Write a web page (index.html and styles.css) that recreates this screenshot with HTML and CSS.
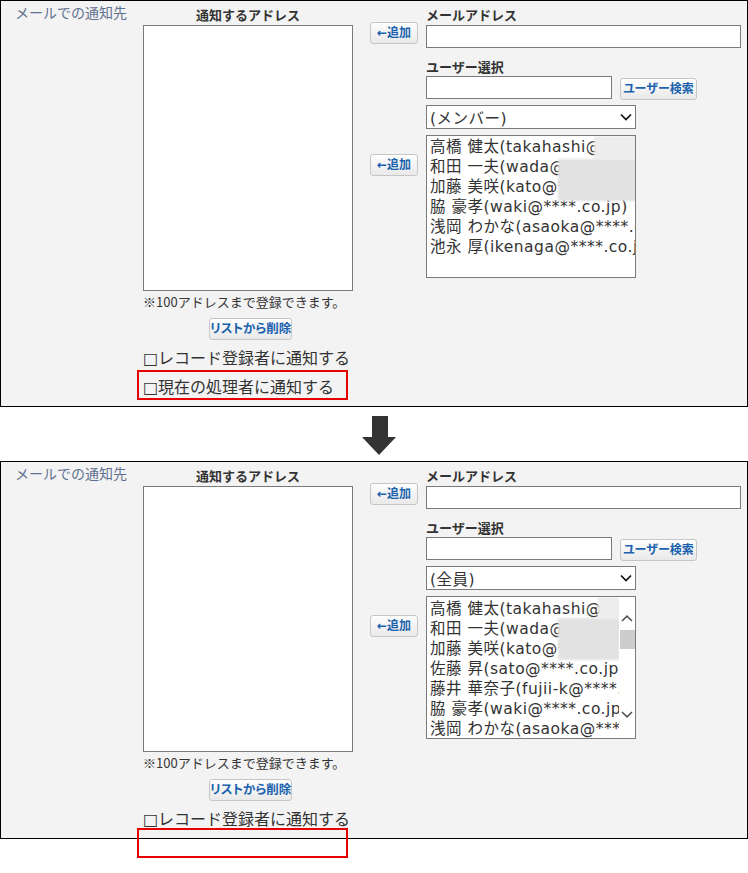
FILE: index.html
```html
<!DOCTYPE html>
<html lang="ja">
<head>
<meta charset="utf-8">
<title>メールでの通知先</title>
<link rel="stylesheet" href="styles.css">
</head>
<body>
<div class="page">
  <section class="panel">
    <div class="label">メールでの通知先</div>
    <div class="addr-col">
      <div class="col-title">通知するアドレス</div>
      <textarea class="addr-list"></textarea>
      <div class="note">※100アドレスまで登録できます。</div>
      <div class="btn-row"><button class="btn btn-remove">リストから削除</button></div>
      <div class="check">□レコード登録者に通知する</div>
      <div class="check">□現在の処理者に通知する</div>
    </div>
    <div class="add-col">
      <button class="btn btn-add">←追加</button>
      <button class="btn btn-add btn-add2">←追加</button>
    </div>
    <div class="pick-col">
      <div class="field-title">メールアドレス</div>
      <input class="mail-input" type="text">
      <div class="field-title user-title">ユーザー選択</div>
      <div class="user-row">
        <input class="user-input" type="text">
        <button class="btn btn-search">ユーザー検索</button>
      </div>
      <div class="select"><span>(メンバー)</span><svg class="chev" width="12" height="8" viewBox="0 0 12 8"><path d="M1 1.5 L6 6.5 L11 1.5" fill="none" stroke="#111" stroke-width="1.7"/></svg></div>
      <div class="listbox">
        <div class="items">
          <div class="item">高橋 健太(takahashi@****.co.jp)</div>
          <div class="item">和田 一夫(wada@****.co.jp)</div>
          <div class="item">加藤 美咲(kato@****.co.jp)</div>
          <div class="item">脇 豪孝(waki@****.co.jp)</div>
          <div class="item">浅岡 わかな(asaoka@****.co.jp)</div>
          <div class="item">池永 厚(ikenaga@****.co.jp)</div>
          <span class="blur blur-a1"></span>
          <span class="blur blur-b1"></span>
        </div>
      </div>
    </div>
    <div class="highlight"></div>
  </section>

  <div class="arrow-row">
    <svg width="34" height="39" viewBox="0 0 34 39"><polygon points="10,0 26,0 26,21 34,21 17,39 0,21 10,21" fill="#333"/></svg>
  </div>

  <section class="panel">
    <div class="label">メールでの通知先</div>
    <div class="addr-col">
      <div class="col-title">通知するアドレス</div>
      <textarea class="addr-list"></textarea>
      <div class="note">※100アドレスまで登録できます。</div>
      <div class="btn-row"><button class="btn btn-remove">リストから削除</button></div>
      <div class="check">□レコード登録者に通知する</div>
    </div>
    <div class="add-col">
      <button class="btn btn-add">←追加</button>
      <button class="btn btn-add btn-add2">←追加</button>
    </div>
    <div class="pick-col">
      <div class="field-title">メールアドレス</div>
      <input class="mail-input" type="text">
      <div class="field-title user-title">ユーザー選択</div>
      <div class="user-row">
        <input class="user-input" type="text">
        <button class="btn btn-search">ユーザー検索</button>
      </div>
      <div class="select"><span>(全員)</span><svg class="chev" width="12" height="8" viewBox="0 0 12 8"><path d="M1 1.5 L6 6.5 L11 1.5" fill="none" stroke="#111" stroke-width="1.7"/></svg></div>
      <div class="listbox">
        <div class="items items-scroll">
          <div class="item">高橋 健太(takahashi@****.co.jp)</div>
          <div class="item">和田 一夫(wada@****.co.jp)</div>
          <div class="item">加藤 美咲(kato@****.co.jp)</div>
          <div class="item">佐藤 昇(sato@****.co.jp)</div>
          <div class="item">藤井 華奈子(fujii-k@****.co.jp)</div>
          <div class="item">脇 豪孝(waki@****.co.jp)</div>
          <div class="item">浅岡 わかな(asaoka@****.co.jp)</div>
          <div class="item">池永 厚(ikenaga@****.co.jp)</div>
          <span class="blur blur-a2"></span>
          <span class="blur blur-b2"></span>
        </div>
        <div class="scrollbar">
          <svg class="sb-up" width="12" height="7" viewBox="0 0 12 7"><path d="M1 6 L6 1.2 L11 6" fill="none" stroke="#555" stroke-width="1.6"/></svg>
          <div class="sb-thumb"></div>
          <svg class="sb-down" width="12" height="7" viewBox="0 0 12 7"><path d="M1 1 L6 5.8 L11 1" fill="none" stroke="#555" stroke-width="1.6"/></svg>
        </div>
      </div>
    </div>
    <div class="highlight highlight-2"></div>
  </section>
</div>
</body>
</html>
```

FILE: styles.css
```css
html,
body {
  margin: 0;
  background: #fff;
}

body {
  color: #333;
  font-family: "DejaVu Sans", "Noto Sans CJK JP", sans-serif;
}

.page {
  width: 748px;
  padding-bottom: 30px;
}

.panel {
  position: relative;
  display: flex;
  align-items: flex-start;
  width: 748px;
  box-sizing: border-box;
  border: 1px solid #000;
  background: #f3f3f3;
  padding: 4px 6px 4px 0;
}

.label {
  width: 142px;
  box-sizing: border-box;
  padding-left: 14px;
  font-family: "Noto Sans CJK JP", sans-serif;
  font-size: 14px;
  line-height: 14px;
  color: #5f7190;
}

.addr-col {
  width: 210px;
  flex: none;
}

.col-title,
.field-title {
  font-family: "Noto Sans CJK JP", sans-serif;
  font-size: 13px;
  font-weight: bold;
  line-height: 19px;
  color: #333;
}

.col-title {
  text-align: center;
}

.addr-list {
  display: block;
  width: 210px;
  height: 266px;
  box-sizing: border-box;
  margin: 1px 0 0;
  padding: 0;
  border: 1px solid #7a7a7a;
  background: #fff;
  resize: none;
}

.note {
  margin-top: 2px;
  font-family: "Noto Sans CJK JP", sans-serif;
  font-size: 13px;
  line-height: 18px;
  white-space: nowrap;
}

.btn-row {
  margin-top: 7px;
  padding-left: 66px;
}

.btn {
  display: block;
  height: 22px;
  box-sizing: border-box;
  padding: 0;
  border: 1px solid #c6c6c6;
  border-radius: 3px;
  background: linear-gradient(#fefefe, #e9e9e9);
  color: #1a62ad;
  font-family: "DejaVu Sans", "Noto Sans CJK JP", sans-serif;
  font-size: 12px;
  font-weight: bold;
  line-height: 20px;
  font-feature-settings: "palt";
  text-align: center;
  white-space: nowrap;
}

.btn-remove {
  width: 83px;
  font-size: 12.5px;
}

.check {
  font-family: "DejaVu Sans", "Noto Sans CJK JP", sans-serif;
  font-size: 16px;
  line-height: 29px;
  white-space: nowrap;
}

.btn-row + .check {
  margin-top: 4px;
}

.add-col {
  width: 48px;
  flex: none;
  margin-left: 17px;
  padding-top: 17px;
}

.btn-add {
  width: 48px;
}

.btn-add2 {
  margin-top: 110px;
}

.pick-col {
  width: 315px;
  flex: none;
  margin-left: 8px;
}

.mail-input,
.user-input {
  display: block;
  height: 23px;
  box-sizing: border-box;
  margin: 0;
  padding: 0 3px;
  border: 1px solid #7a7a7a;
  background: #fff;
}

.mail-input {
  width: 315px;
  margin-top: 1px;
}

.user-title {
  margin-top: 9px;
}

.user-row {
  display: flex;
  align-items: flex-start;
  gap: 8px;
}

.user-input {
  width: 186px;
}

.btn-search {
  width: 77px;
  margin-top: 2px;
}

.select {
  display: flex;
  align-items: center;
  justify-content: space-between;
  width: 210px;
  height: 24px;
  box-sizing: border-box;
  margin-top: 5px;
  padding: 0 3px 0 3px;
  border: 1px solid #7a7a7a;
  background: #fff;
  font-size: 15.5px;
  letter-spacing: 0.5px;
  color: #333;
}

.listbox {
  display: flex;
  width: 210px;
  height: 143px;
  box-sizing: border-box;
  margin-top: 6px;
  border: 1px solid #7a7a7a;
  background: #fff;
  overflow: hidden;
}

.items {
  position: relative;
  flex: 1;
  min-width: 0;
  padding: 1px 0 0 3px;
  overflow: hidden;
}

.items-scroll {
  padding-top: 2px;
}

.item {
  font-size: 15.5px;
  letter-spacing: 0.5px;
  line-height: 20px;
  white-space: nowrap;
  color: #333;
}

.blur {
  position: absolute;
  display: block;
  filter: blur(1px);
}

.blur-a1 {
  left: 167px;
  top: 0;
  width: 43px;
  height: 23px;
  background: #ededed;
}

.blur-b1 {
  left: 131px;
  top: 23px;
  width: 79px;
  height: 42px;
  background: #e2e2e2;
}

.blur-a2 {
  left: 171px;
  top: 0;
  width: 22px;
  height: 21px;
  background: #ededed;
}

.blur-b2 {
  left: 131px;
  top: 21px;
  width: 62px;
  height: 42px;
  background: #e2e2e2;
}

.scrollbar {
  display: flex;
  flex-direction: column;
  align-items: center;
  width: 16px;
  flex: none;
  background: #fff;
}

.sb-up {
  margin-top: 18px;
}

.sb-thumb {
  width: 15px;
  height: 19px;
  margin-top: 8px;
  background: #cdcdcd;
}

.sb-down {
  margin-top: 62px;
}

.arrow-row {
  height: 54px;
  box-sizing: border-box;
  padding: 9px 0 0 362px;
}

.arrow-row svg {
  display: block;
}

.highlight {
  position: absolute;
  left: 136px;
  top: 369px;
  width: 211px;
  height: 30px;
  box-sizing: border-box;
  border: 2px solid #e60000;
}

.highlight-2 {
  top: 366px;
}
```
